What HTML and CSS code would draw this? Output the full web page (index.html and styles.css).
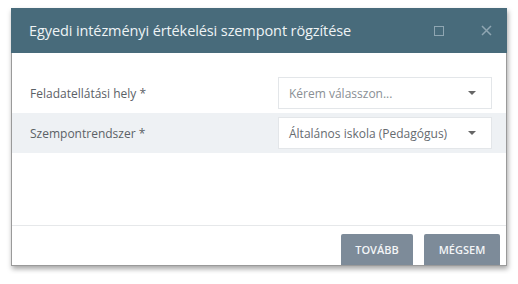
FILE: index.html
```html
<!DOCTYPE html>
<html lang="hu">
<head>
  <meta charset="UTF-8">
  <title>Egyedi intézményi értékelési szempont rögzítése</title>
  <link rel="stylesheet" href="styles.css">
</head>
<body>
  <div class="dialog">
    <div class="dialog-header">
      <span class="dialog-title">Egyedi intézményi értékelési szempont rögzítése</span>
      <span class="header-icons">
        <span class="icon-max"></span>
        <svg class="icon-close" width="11" height="11" viewBox="0 0 11 11">
          <path d="M1 1 L10 10 M10 1 L1 10" stroke="#8fa6b2" stroke-width="1.5" fill="none"/>
        </svg>
      </span>
    </div>

    <div class="dialog-body">
      <div class="form-row first">
        <label>Feladatellátási hely *</label>
        <div class="select">
          <span class="placeholder">Kérem válasszon...</span>
          <span class="caret"></span>
        </div>
      </div>
      <div class="form-row alt">
        <label>Szempontrendszer *</label>
        <div class="select">
          <span>Általános iskola (Pedagógus)</span>
          <span class="caret"></span>
        </div>
      </div>
    </div>

    <div class="dialog-footer">
      <button class="btn">TOVÁBB</button>
      <button class="btn">MÉGSEM</button>
    </div>
  </div>
</body>
</html>
```

FILE: styles.css
```css
* {
  box-sizing: border-box;
}

body {
  margin: 0;
  padding: 8px 11px;
  background: #fff;
  font-family: 'Open Sans', 'Noto Sans', sans-serif;
}

.dialog {
  width: 496px;
  border: 1px solid #9a9a9a;
  border-top: none;
  background: #fff;
  box-shadow: 1px 3px 5px rgba(0, 0, 0, 0.35);
}

.dialog-header {
  height: 45px;
  background-color: #486b7b;
  display: flex;
  align-items: center;
  padding: 0 15px 0 18px;
  margin: 0 -1px;
}

.dialog-title {
  flex: 1;
  color: #eef3f5;
  font-size: 14.5px;
  letter-spacing: -0.1px;
}

.header-icons {
  display: flex;
  align-items: center;
  gap: 37px;
}

.icon-max {
  width: 10px;
  height: 10px;
  border: 1.5px solid #8fa6b2;
}

.icon-close {
  display: block;
}

.dialog-body {
  height: 173px;
  border-bottom: 1px solid #e6e8ea;
}

.form-row {
  display: flex;
  align-items: center;
  justify-content: space-between;
  padding: 0 14px 0 18px;
  height: 40px;
}

.form-row.first {
  height: 60px;
  padding-top: 20px;
}

.form-row.alt {
  background-color: #eef1f4;
}

.form-row label {
  font-size: 12px;
  color: #5b6166;
}

.select {
  width: 214px;
  height: 32px;
  border: 1px solid #e3e6e9;
  background: #fff;
  display: flex;
  align-items: center;
  justify-content: space-between;
  padding: 0 15px 0 10px;
  font-size: 12px;
  color: #666b70;
}

.select .placeholder {
  color: #8a8f94;
}

.caret {
  width: 0;
  height: 0;
  border-left: 4px solid transparent;
  border-right: 4px solid transparent;
  border-top: 4px solid #666;
}

.dialog-footer {
  display: flex;
  justify-content: flex-end;
  gap: 11px;
  padding: 8px 6px 0 0;
}

.btn {
  height: 31px;
  padding: 0 13px;
  min-width: 72px;
  background-color: #7d8b99;
  color: #f3f5f7;
  border: none;
  border-radius: 2px 2px 0 0;
  font-family: 'Open Sans', 'Noto Sans', sans-serif;
  font-size: 11px;
  font-weight: 600;
}

.btn:last-child {
  min-width: 76px;
}
```
